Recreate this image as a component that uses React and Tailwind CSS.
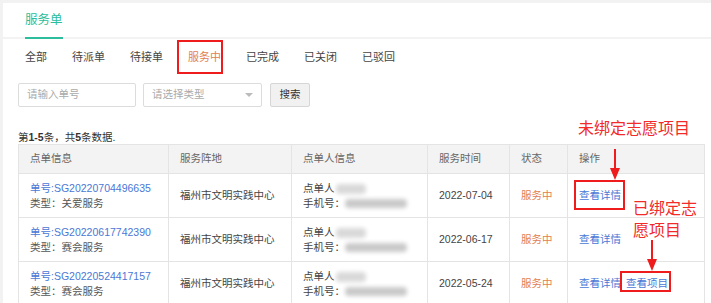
import React from 'react';

const tabs = ['全部', '待派单', '待接单', '服务中', '已完成', '已关闭', '已驳回'];

const rows = [
  { no: 'SG20220704496635', type: '关爱服务', date: '2022-07-04', project: false },
  { no: 'SG20220617742390', type: '赛会服务', date: '2022-06-17', project: false },
  { no: 'SG20220524417157', type: '赛会服务', date: '2022-05-24', project: true },
];

const Blur = ({ className }) => (
  <span className={`inline-block align-middle rounded-sm bg-[#c9c9c9] blur-[2px] ${className}`} />
);

const App = () => {
  return (
    <div className="w-[711px] h-[303px] overflow-hidden bg-[#f2f2f2] pt-[3px] pl-[3px] font-['Liberation_Sans','Noto_Sans_CJK_SC',sans-serif] text-[10.5px] text-[#333]">
      <div className="relative h-[300px] bg-white">
        {/* title tab */}
        <div className="h-[36px] border-b-2 border-[#f3f3f3] px-[22px] flex">
          <div className="h-[36px] flex items-center border-b-2 border-[#2bbd9c] text-[12.5px] text-[#2bbd9c]">服务单</div>
        </div>

        {/* status tabs */}
        <div className="h-[36px] flex items-center gap-[25px] pl-[22px] text-[11px] text-[#444]">
          {tabs.map((t) => (
            <span key={t} className={t === '服务中' ? 'text-[#e2804f]' : ''}>{t}</span>
          ))}
        </div>

        {/* filters */}
        <div className="mt-[8px] flex items-center pl-[15px]">
          <div className="w-[118px] h-[24px] border border-[#dcdcdc] rounded-[2px] flex items-center pl-[8px] text-[#aaa]">请输入单号</div>
          <div className="ml-[7px] w-[119px] h-[24px] border border-[#dcdcdc] rounded-[2px] flex items-center justify-between pl-[8px] pr-[8px] text-[#aaa]">
            <span>请选择类型</span>
            <span className="w-0 h-0 border-l-[4px] border-r-[4px] border-t-[4px] border-l-transparent border-r-transparent border-t-[#bbb]" />
          </div>
          <div className="ml-[8px] w-[40px] h-[24px] border border-[#d6d6d6] rounded-[2px] bg-[#f1f1f1] flex items-center justify-center text-[#333]">搜索</div>
        </div>

        <div className="mt-[23px] pl-[15px] text-[#333] leading-[14px]">
          第<b>1-5</b>条，共<b>5</b>条数据.
        </div>

        {/* table */}
        <table className="ml-[15px] mt-[0px] w-[686px] table-fixed border-collapse">
          <colgroup>
            <col className="w-[150px]" />
            <col className="w-[123px]" />
            <col className="w-[136px]" />
            <col className="w-[82px]" />
            <col className="w-[58px]" />
            <col className="w-[137px]" />
          </colgroup>
          <thead>
            <tr className="h-[29px] bg-[#f3f3f3] text-[#666]">
              {['点单信息', '服务阵地', '点单人信息', '服务时间', '状态', '操作'].map((h) => (
                <th key={h} className="border border-[#e4e4e4] text-left font-normal px-[11px]">{h}</th>
              ))}
            </tr>
          </thead>
          <tbody>
            {rows.map((r) => (
              <tr key={r.no} className="h-[44px]">
                <td className="border border-[#e4e4e4] px-[11px] leading-[15px]">
                  <div className="text-[#4a78d6]">单号:{r.no}</div>
                  <div className="text-[#555]">类型：{r.type}</div>
                </td>
                <td className="border border-[#e4e4e4] px-[11px] text-[#444]">福州市文明实践中心</td>
                <td className="border border-[#e4e4e4] px-[11px] leading-[15px] text-[#444]">
                  <div className="whitespace-nowrap">点单人<Blur className="w-[30px] h-[10px] ml-[1px] opacity-70" /></div>
                  <div className="whitespace-nowrap">手机号：<Blur className="w-[62px] h-[9px]" /></div>
                </td>
                <td className="border border-[#e4e4e4] px-[11px] text-[#444]">{r.date}</td>
                <td className="border border-[#e4e4e4] px-[11px] text-[#e2804f]">服务中</td>
                <td className="border border-[#e4e4e4] px-[11px] text-[#4a78d6] whitespace-nowrap">
                  查看详情{r.project && <span className="ml-[5px]">查看项目</span>}
                </td>
              </tr>
            ))}
          </tbody>
        </table>

        {/* annotations */}
        <div className="absolute left-[174px] top-[37px] w-[46px] h-[34px] border-2 border-[#ee1c1c]" />
        <div className="absolute left-[575px] top-[116px] text-[16px] leading-[20px] text-[#f22a2a]">未绑定志愿项目</div>
        <svg className="absolute left-[603px] top-[143px]" width="18" height="36" viewBox="0 0 18 36">
          <line x1="9" y1="3" x2="9" y2="24" stroke="#ee1c1c" strokeWidth="2" />
          <polygon points="4,22 14,22 9,34" fill="#ee1c1c" />
        </svg>
        <div className="absolute left-[571px] top-[177px] w-[51px] h-[30px] border-2 border-[#ee1c1c]" />
        <div className="absolute left-[630px] top-[195px] text-[16px] leading-[22px] text-[#f22a2a] w-[70px]">
          已绑定志<br />愿项目
        </div>
        <svg className="absolute left-[640px] top-[234px]" width="18" height="36" viewBox="0 0 18 36">
          <line x1="9" y1="3" x2="9" y2="24" stroke="#ee1c1c" strokeWidth="2" />
          <polygon points="4,22 14,22 9,34" fill="#ee1c1c" />
        </svg>
        <div className="absolute left-[617px] top-[268px] w-[51px] h-[21px] border-2 border-[#ee1c1c]" />
      </div>
    </div>
  );
};

export default App;
